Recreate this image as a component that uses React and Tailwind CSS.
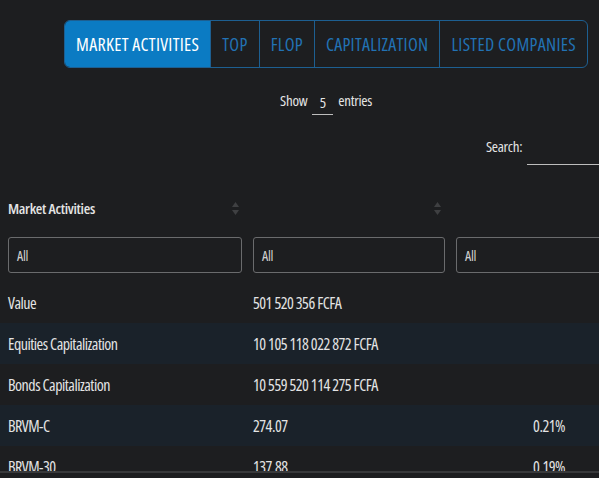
import React from 'react';

const tabs = ['MARKET ACTIVITIES', 'TOP', 'FLOP', 'CAPITALIZATION', 'LISTED COMPANIES'];

const rows = [
  { name: 'Value', value: '501 520 356 FCFA', pct: '' },
  { name: 'Equities Capitalization', value: '10 105 118 022 872 FCFA', pct: '' },
  { name: 'Bonds Capitalization', value: '10 559 520 114 275 FCFA', pct: '' },
  { name: 'BRVM-C', value: '274.07', pct: '0.21%' },
  { name: 'BRVM-30', value: '137.88', pct: '0.19%' },
];

const SortIcon = () => (
  <svg width="7" height="13" viewBox="0 0 7 13" className="text-[#3f4042]">
    <path d="M3.5 0 L7 5 L0 5 Z" fill="currentColor" />
    <path d="M3.5 13 L7 8 L0 8 Z" fill="currentColor" />
  </svg>
);

const App = () => {
  return (
    <div
      className="w-[599px] h-[478px] overflow-hidden bg-[#1d1e20] text-[#e4e4e4]"
      style={{ fontFamily: '"Open Sans", "Noto Sans", sans-serif', fontStretch: '75%' }}
    >
      <div className="w-[652px] pt-5">
        <div className="flex justify-center">
          <div className="flex h-12 border border-[#1d5f91] rounded-md overflow-hidden text-[18px] tracking-[0.3px]">
            {tabs.map((t, i) => (
              <div
                key={t}
                className={
                  i === 0
                    ? 'flex items-center px-[11px] bg-[#0b7bc3] text-white'
                    : 'flex items-center px-[11px] border-l border-[#1d5f91] text-[#2272b4]'
                }
              >
                {t}
              </div>
            ))}
          </div>
        </div>

        <div className="flex justify-center items-center mt-[20px] text-[15px] tracking-[-0.3px] h-6">
          <span>Show</span>
          <span className="mx-[5px] w-[21px] text-center border-b border-[#bdbdbd] pb-[4px] mt-[8px] leading-[16px]">5</span>
          <span>entries</span>
        </div>

        <div className="flex items-center mt-[16px] text-[15px] tracking-[-0.3px] pl-[486px]">
          <span>Search:</span>
          <span className="ml-[5px] w-[120px] h-[20px] border-b border-[#bdbdbd] mt-[17px]"></span>
        </div>

        <div className="mt-[20px] h-[288px] overflow-hidden border-b-2 border-[#38393b]">
          <table className="w-[652px] border-collapse table-fixed text-[16px] tracking-[-0.5px]">
            <colgroup>
              <col className="w-[249px]" />
              <col className="w-[204px]" />
              <col className="w-[199px]" />
            </colgroup>
            <thead>
              <tr className="h-[46px]">
                <th className="text-left font-semibold pl-2 pr-[10px] text-[15px] tracking-[-0.3px]">
                  <div className="flex items-center justify-between">
                    <span>Market Activities</span>
                    <SortIcon />
                  </div>
                </th>
                <th className="pr-[12px]">
                  <div className="flex justify-end">
                    <SortIcon />
                  </div>
                </th>
                <th></th>
              </tr>
              <tr className="h-[51px]">
                <td className="pl-2 pr-[7px] align-top pt-[6px]">
                  <div className="h-9 border border-[#6a6b6d] rounded-[3px] flex items-center px-2 text-[14px] tracking-[-0.3px] text-[#cfcfcf]">
                    All
                  </div>
                </td>
                <td className="pl-[4px] pr-[8px] align-top pt-[6px]">
                  <div className="h-9 border border-[#6a6b6d] rounded-[3px] flex items-center px-2 text-[14px] tracking-[-0.3px] text-[#cfcfcf]">
                    All
                  </div>
                </td>
                <td className="pl-[3px] pr-2 align-top pt-[6px]">
                  <div className="h-9 border border-[#6a6b6d] rounded-[3px] flex items-center px-2 text-[14px] tracking-[-0.3px] text-[#cfcfcf]">
                    All
                  </div>
                </td>
              </tr>
            </thead>
            <tbody>
              {rows.map((r, i) => (
                <tr key={r.name} className={i % 2 === 1 ? 'h-[41px] bg-[#1a222a]' : 'h-[41px]'}>
                  <td className="pl-2">{r.name}</td>
                  <td className="pl-[4px]">{r.value}</td>
                  <td className="text-right pr-[87px]">{r.pct}</td>
                </tr>
              ))}
            </tbody>
          </table>
        </div>
      </div>
    </div>
  );
};

export default App;
